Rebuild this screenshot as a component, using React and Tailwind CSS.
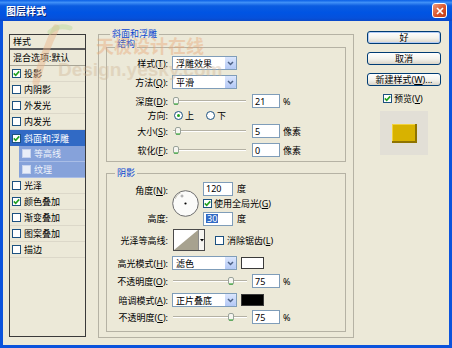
import React from "react";

const FONT = "font-['Noto_Sans','Noto_Sans_CJK_SC',sans-serif]";

function Check({ on, light }) {
  return (
    <span
      className={
        "inline-flex w-[9px] h-[9px] shrink-0 items-center justify-center border " +
        (light ? "border-[#c8d4ee] bg-[#e9eef8]" : "border-[#1c5180] bg-white")
      }
    >
      {on && (
        <svg width="7" height="7" viewBox="0 0 7 7">
          <path d="M0.8 3.4 L2.7 5.3 L6.2 1.4" stroke="#21a121" strokeWidth="1.6" fill="none" />
        </svg>
      )}
    </span>
  );
}

function Radio({ on }) {
  return (
    <span className="inline-flex w-[9px] h-[9px] shrink-0 items-center justify-center rounded-full border border-[#1c5180] bg-white">
      {on && <span className="w-[3px] h-[3px] rounded-full bg-[#21a121]" />}
    </span>
  );
}

function Select({ text }) {
  return (
    <div className="flex h-[14px] w-[65px] items-center border border-[#7f9db9] bg-white">
      <span className="flex-1 pl-[3px] leading-none">{text}</span>
      <span className="flex h-full w-[12px] items-center justify-center rounded-[1px] border-l border-white bg-[linear-gradient(#dbe6fd,#b3c8f5)]">
        <svg width="7" height="5" viewBox="0 0 7 5">
          <path d="M1 1 L3.5 3.5 L6 1" stroke="#4d6185" strokeWidth="1.5" fill="none" />
        </svg>
      </span>
    </div>
  );
}

function Slider({ pos, w }) {
  return (
    <div className={"relative h-[14px] " + (w === 74 ? "w-[74px]" : "w-[73px]")}>
      <div className="absolute left-0 right-0 top-[6px] h-[2px] border-t border-[#b4b1a4] border-b border-b-white" />
      <svg className="absolute top-[3px]" style={{ left: pos }} width="6" height="8" viewBox="0 0 6 8">
        <rect x="0.5" y="0.5" width="5" height="7" rx="1.5" fill="#f6f5f0" stroke="#9aa39a" />
        <path d="M1 7 H5" stroke="#3fae3f" strokeWidth="1.2" />
      </svg>
    </div>
  );
}

function Input({ value, w = "w-[28px]", sel }) {
  return (
    <div className={"flex h-[14px] items-center border border-[#7f9db9] bg-white pl-[2px] " + w}>
      {sel ? (
        <span className="bg-[#316ac5] px-[1px] leading-none text-white">{value}</span>
      ) : (
        <span className="leading-none">{value}</span>
      )}
    </div>
  );
}

function Label({ children }) {
  return <span className="w-[61px] shrink-0 text-right leading-none">{children}</span>;
}

function Btn({ children, def }) {
  return (
    <div
      className={
        "flex h-[13px] w-full items-center justify-center rounded-[3px] border border-[#003c74] bg-[linear-gradient(#ffffff,#f3f2ec_55%,#d9d4c8)] leading-none " +
        (def ? "shadow-[inset_0_0_0_1px_#b2cbf5]" : "")
      }
    >
      {children}
    </div>
  );
}

const items = [
  { t: "投影", c: true },
  { t: "内阴影" },
  { t: "外发光" },
  { t: "内发光" },
  { t: "斜面和浮雕", c: true, sel: true },
  { t: "等高线", sub: true },
  { t: "纹理", sub: true },
  { t: "光泽" },
  { t: "颜色叠加", c: true },
  { t: "渐变叠加" },
  { t: "图案叠加" },
  { t: "描边" },
];

function StyleList() {
  return (
    <div className="mt-[6px] h-[303px] w-[77px] shrink-0 border border-[#3a3a3a] bg-[#ece9d8]">
      <div className="flex h-[15px] items-center border-b-2 border-[#5a5a5a] pl-[3px] leading-none">样式</div>
      <div className="flex h-[16px] items-center border-b border-[#a8a596] pl-[3px] leading-none">混合选项:默认</div>
      {items.map((it) =>
        it.sub ? (
          <div key={it.t} className="flex h-[16px] pl-[9px]">
            <div className="flex flex-1 items-center border-b border-[#a9bde6] bg-[#86a2da] pl-[3px] text-[#eef2fb]">
              <Check light />
              <span className="ml-[3px] leading-none">{it.t}</span>
            </div>
          </div>
        ) : (
          <div
            key={it.t}
            className={
              "flex h-[16px] items-center pl-[2px] " +
              (it.sel ? "bg-[#316ac5] text-white" : "border-b border-[#dcd8c9]")
            }
          >
            <Check on={it.c} />
            <span className="ml-[3px] leading-none">{it.t}</span>
          </div>
        )
      )}
    </div>
  );
}

function Dial() {
  return (
    <svg width="27" height="27" viewBox="0 0 27 27">
      <circle cx="13.5" cy="13.5" r="12.8" fill="#fbfbf9" stroke="#6c6c6c" />
      <path d="M3 9 A11 11 0 0 1 9 2.5" stroke="#c9c6ba" strokeWidth="1" fill="none" />
      <path d="M8.5 6 H11.5 M10 4.5 V7.5" stroke="#8a8a8a" strokeWidth="0.8" />
      <circle cx="13.5" cy="13.5" r="1.1" fill="#000" />
    </svg>
  );
}

function Contour() {
  return (
    <div className="flex h-[22px] border border-[#4a4a4a]">
      <svg width="24" height="20" viewBox="0 0 24 20">
        <rect width="24" height="20" fill="#fff" />
        <path d="M0 20 L24 0 L24 20 Z" fill="#a7a28f" />
      </svg>
      <div className="flex w-[6px] items-center justify-center border-l border-[#8a8a8a] bg-[#f7f6f1]">
        <svg width="4" height="3" viewBox="0 0 4 3">
          <path d="M0 0 H4 L2 2.6 Z" fill="#000" />
        </svg>
      </div>
    </div>
  );
}

function Watermark() {
  return (
    <div className="pointer-events-none absolute inset-0">
      <svg className="absolute left-[30px] top-[22px]" width="60" height="70" viewBox="0 0 60 70">
        <path d="M26 6 Q14 30 6 60" stroke="#eab48a" strokeWidth="7" fill="none" opacity="0.45" strokeLinecap="round" />
        <path d="M20 10 Q28 2 40 6" stroke="#b9d79a" strokeWidth="5" fill="none" opacity="0.45" strokeLinecap="round" />
      </svg>
      <div className="absolute left-[96px] top-[37px] text-[18px] font-bold leading-none text-[#e9a675] opacity-[0.42]">
        天极设计在线
      </div>
      <div className="absolute left-[58px] top-[60px] text-[19px] font-bold leading-none text-[#cfb394] opacity-[0.38] font-['Liberation_Sans',sans-serif]">
        Design.yesky.com
      </div>
    </div>
  );
}

export default function App() {
  return (
    <div className={"relative flex h-[348px] w-[452px] flex-col overflow-hidden bg-[#0b53dc] text-[9px] text-black " + FONT}>
      {/* title bar */}
      <div className="flex h-[21px] shrink-0 items-center justify-between bg-[linear-gradient(to_bottom,#0a5fe6_0%,#3f8ff7_12%,#0b5ce0_28%,#0054e3_60%,#0551dc_85%,#0a48c8_100%)] pl-[6px] pr-[5px]">
        <span className="text-[10px] font-bold leading-none text-white [text-shadow:1px_1px_0_#0a2a80]">图层样式</span>
        <span className="flex h-[15px] w-[15px] items-center justify-center rounded-[3px] border border-white bg-[linear-gradient(135deg,#f09a78,#d9542c_55%,#c13b14)]">
          <svg width="8" height="8" viewBox="0 0 8 8">
            <path d="M1 1 L7 7 M7 1 L1 7" stroke="#fff" strokeWidth="1.7" />
          </svg>
        </span>
      </div>

      {/* body */}
      <div className="mx-[3px] mb-[3px] flex flex-1 items-start bg-[#ece9d8] pl-[6px] pt-[7px]">
        <StyleList />

        {/* bevel & emboss group */}
        <fieldset className="ml-[12px] w-[256px] shrink-0 border border-[#b5b2a4] px-[7px] pb-[5px]">
          <legend className="ml-[4px] bg-[#ece9d8] px-[2px] leading-[12px] text-[#0a46d2]">斜面和浮雕</legend>

          {/* structure */}
          <fieldset className="-mt-[2px] border border-[#b5b2a4] pb-[4px]">
            <legend className="ml-[8px] bg-[#ece9d8] px-[2px] pb-[6px] leading-[12px] text-[#0a46d2]">结构</legend>
            <div className="flex h-[14px] items-center">
              <Label>样式(<u>T</u>):</Label>
              <div className="ml-[4px]"><Select text="浮雕效果" /></div>
            </div>
            <div className="mt-[5px] flex h-[14px] items-center">
              <Label>方法(<u>Q</u>):</Label>
              <div className="ml-[4px]"><Select text="平滑" /></div>
            </div>
            <div className="mt-[5px] flex h-[14px] items-center">
              <Label>深度(<u>D</u>):</Label>
              <div className="ml-[5px]"><Slider pos={0} /></div>
              <div className="ml-[6px]"><Input value="21" /></div>
              <span className="ml-[3px] leading-none">%</span>
            </div>
            <div className="mt-[1px] flex h-[13px] items-center">
              <Label>方向:</Label>
              <div className="ml-[6px] flex items-center">
                <Radio on />
                <span className="ml-[2px] leading-none">上</span>
              </div>
              <div className="ml-[12px] flex items-center">
                <Radio />
                <span className="ml-[2px] leading-none">下</span>
              </div>
            </div>
            <div className="mt-[2px] flex h-[14px] items-center">
              <Label>大小(<u>S</u>):</Label>
              <div className="ml-[5px]"><Slider pos={2} /></div>
              <div className="ml-[6px]"><Input value="5" /></div>
              <span className="ml-[3px] leading-none">像素</span>
            </div>
            <div className="mt-[5px] flex h-[14px] items-center">
              <Label>软化(<u>F</u>):</Label>
              <div className="ml-[5px]"><Slider pos={0} /></div>
              <div className="ml-[6px]"><Input value="0" /></div>
              <span className="ml-[3px] leading-none">像素</span>
            </div>
          </fieldset>

          {/* shading */}
          <fieldset className="mt-[5px] border border-[#b5b2a4] pb-[7px]">
            <legend className="ml-[8px] bg-[#ece9d8] px-[2px] leading-[12px] text-[#0a46d2]">阴影</legend>

            <div className="mt-[3px] flex h-[44px] items-start">
              <div className="flex w-[61px] shrink-0 flex-col items-end">
                <span className="mt-[1px] flex h-[14px] items-center leading-none">角度(<u>N</u>):</span>
                <span className="mt-[14px] flex h-[14px] items-center leading-none">高度:</span>
              </div>
              <div className="ml-[4px] mt-[8px]"><Dial /></div>
              <div className="ml-[4px] flex flex-col">
                <div className="flex h-[13px] items-center">
                  <Input value="120" w="w-[30px]" />
                  <span className="ml-[4px] leading-none">度</span>
                </div>
                <div className="mt-[2px] flex h-[12px] items-center">
                  <Check on />
                  <span className="ml-[2px] leading-none">使用全局光(<u>G</u>)</span>
                </div>
                <div className="mt-[3px] flex h-[13px] items-center">
                  <Input value="30" w="w-[30px]" sel />
                  <span className="ml-[4px] leading-none">度</span>
                </div>
              </div>
            </div>

            <div className="mt-[3px] flex h-[22px] items-center">
              <Label>光泽等高线:</Label>
              <div className="ml-[5px]"><Contour /></div>
              <div className="ml-[10px] flex items-center">
                <Check />
                <span className="ml-[3px] leading-none">消除锯齿(<u>L</u>)</span>
              </div>
            </div>

            <div className="mt-[5px] flex h-[14px] items-center">
              <Label>高光模式(<u>H</u>):</Label>
              <div className="ml-[4px]"><Select text="滤色" /></div>
              <div className="ml-[4px] h-[12px] w-[23px] border border-[#3a3a3a] bg-white" />
            </div>
            <div className="mt-[4px] flex h-[14px] items-center">
              <Label>不透明度(<u>O</u>):</Label>
              <div className="ml-[5px]"><Slider pos={55} w={74} /></div>
              <div className="ml-[5px]"><Input value="75" /></div>
              <span className="ml-[3px] leading-none">%</span>
            </div>
            <div className="mt-[5px] flex h-[14px] items-center">
              <Label>暗调模式(<u>A</u>):</Label>
              <div className="ml-[4px]"><Select text="正片叠底" /></div>
              <div className="ml-[4px] h-[12px] w-[23px] border border-[#3a3a3a] bg-black" />
            </div>
            <div className="mt-[3px] flex h-[14px] items-center">
              <Label>不透明度(<u>C</u>):</Label>
              <div className="ml-[5px]"><Slider pos={55} w={74} /></div>
              <div className="ml-[5px]"><Input value="75" /></div>
              <span className="ml-[3px] leading-none">%</span>
            </div>
          </fieldset>
        </fieldset>

        {/* right column */}
        <div className="ml-[13px] mt-[3px] flex w-[74px] shrink-0 flex-col">
          <Btn def>好</Btn>
          <div className="mt-[8px]"><Btn>取消</Btn></div>
          <div className="mt-[8px]"><Btn>新建样式(<u>W</u>)...</Btn></div>
          <div className="mt-[6px] flex h-[12px] items-center pl-[16px]">
            <Check on />
            <span className="ml-[2px] leading-none">预览(<u>V</u>)</span>
          </div>
          <div className="ml-[13px] mt-[7px] flex h-[44px] w-[48px] items-center justify-center bg-[#e2dfd6]">
            <div className="h-[19px] w-[25px] bg-[#d8b200] shadow-[inset_-2px_-2px_0_#8f7400,inset_1px_1px_0_#f2d23c]" />
          </div>
        </div>
      </div>

      <Watermark />
    </div>
  );
}
